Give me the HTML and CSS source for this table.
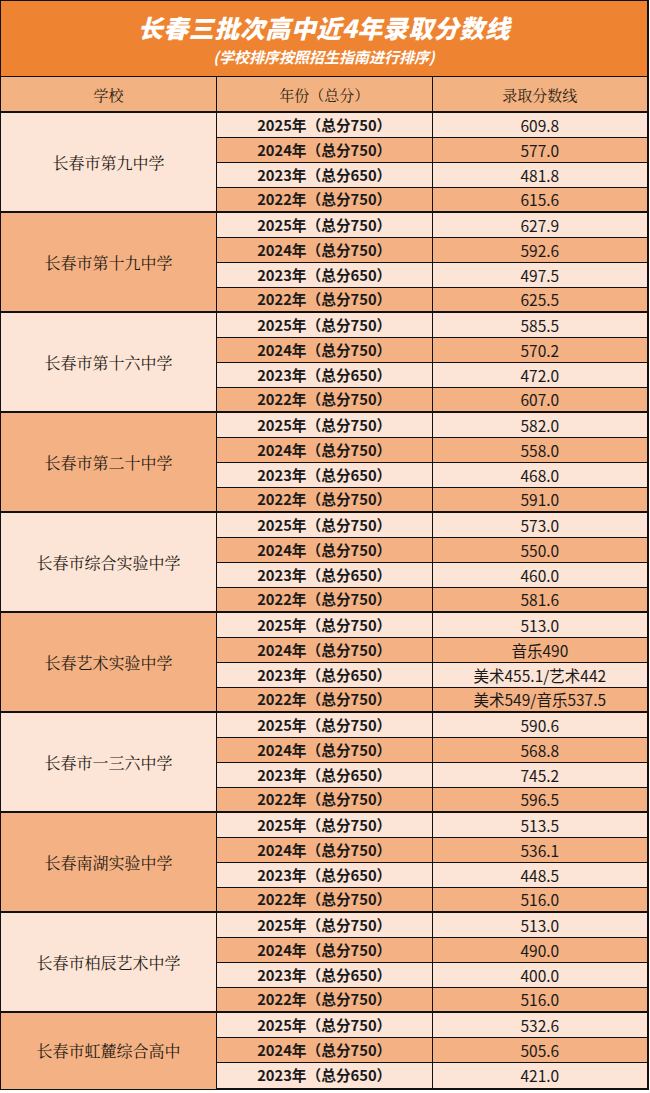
FILE: index.html
```html
<!DOCTYPE html>
<html lang="zh-CN">
<head>
<meta charset="utf-8">
<title>长春三批次高中近4年录取分数线</title>
<link rel="stylesheet" href="styles.css">
</head>
<body>
<table class="sheet">
  <thead>
    <tr class="title-row">
      <th colspan="3" class="title-cell">
        <div class="title">长春三批次高中近4年录取分数线</div>
        <div class="subtitle">(学校排序按照招生指南进行排序)</div>
      </th>
    </tr>
    <tr class="head-row">
      <th class="c1">学校</th>
      <th class="c2">年份（总分）</th>
      <th class="c3">录取分数线</th>
    </tr>
  </thead>
  <tbody>
    <tr class="first lt"><td class="school lt" rowspan="4">长春市第九中学</td><td class="year">2025年（总分750）</td><td class="score">609.8</td></tr>
    <tr class="dk"><td class="year">2024年（总分750）</td><td class="score">577.0</td></tr>
    <tr class="lt"><td class="year">2023年（总分650）</td><td class="score">481.8</td></tr>
    <tr class="dk"><td class="year">2022年（总分750）</td><td class="score">615.6</td></tr>

    <tr class="first lt"><td class="school dk" rowspan="4">长春市第十九中学</td><td class="year">2025年（总分750）</td><td class="score">627.9</td></tr>
    <tr class="dk"><td class="year">2024年（总分750）</td><td class="score">592.6</td></tr>
    <tr class="lt"><td class="year">2023年（总分650）</td><td class="score">497.5</td></tr>
    <tr class="dk"><td class="year">2022年（总分750）</td><td class="score">625.5</td></tr>

    <tr class="first lt"><td class="school lt" rowspan="4">长春市第十六中学</td><td class="year">2025年（总分750）</td><td class="score">585.5</td></tr>
    <tr class="dk"><td class="year">2024年（总分750）</td><td class="score">570.2</td></tr>
    <tr class="lt"><td class="year">2023年（总分650）</td><td class="score">472.0</td></tr>
    <tr class="dk"><td class="year">2022年（总分750）</td><td class="score">607.0</td></tr>

    <tr class="first lt"><td class="school dk" rowspan="4">长春市第二十中学</td><td class="year">2025年（总分750）</td><td class="score">582.0</td></tr>
    <tr class="dk"><td class="year">2024年（总分750）</td><td class="score">558.0</td></tr>
    <tr class="lt"><td class="year">2023年（总分650）</td><td class="score">468.0</td></tr>
    <tr class="dk"><td class="year">2022年（总分750）</td><td class="score">591.0</td></tr>

    <tr class="first lt"><td class="school lt" rowspan="4">长春市综合实验中学</td><td class="year">2025年（总分750）</td><td class="score">573.0</td></tr>
    <tr class="dk"><td class="year">2024年（总分750）</td><td class="score">550.0</td></tr>
    <tr class="lt"><td class="year">2023年（总分650）</td><td class="score">460.0</td></tr>
    <tr class="dk"><td class="year">2022年（总分750）</td><td class="score">581.6</td></tr>

    <tr class="first lt"><td class="school dk" rowspan="4">长春艺术实验中学</td><td class="year">2025年（总分750）</td><td class="score">513.0</td></tr>
    <tr class="dk"><td class="year">2024年（总分750）</td><td class="score">音乐490</td></tr>
    <tr class="lt"><td class="year">2023年（总分650）</td><td class="score">美术455.1/艺术442</td></tr>
    <tr class="dk"><td class="year">2022年（总分750）</td><td class="score">美术549/音乐537.5</td></tr>

    <tr class="first lt"><td class="school lt" rowspan="4">长春市一三六中学</td><td class="year">2025年（总分750）</td><td class="score">590.6</td></tr>
    <tr class="dk"><td class="year">2024年（总分750）</td><td class="score">568.8</td></tr>
    <tr class="lt"><td class="year">2023年（总分650）</td><td class="score">745.2</td></tr>
    <tr class="dk"><td class="year">2022年（总分750）</td><td class="score">596.5</td></tr>

    <tr class="first lt"><td class="school dk" rowspan="4">长春南湖实验中学</td><td class="year">2025年（总分750）</td><td class="score">513.5</td></tr>
    <tr class="dk"><td class="year">2024年（总分750）</td><td class="score">536.1</td></tr>
    <tr class="lt"><td class="year">2023年（总分650）</td><td class="score">448.5</td></tr>
    <tr class="dk"><td class="year">2022年（总分750）</td><td class="score">516.0</td></tr>

    <tr class="first lt"><td class="school lt" rowspan="4">长春市柏辰艺术中学</td><td class="year">2025年（总分750）</td><td class="score">513.0</td></tr>
    <tr class="dk"><td class="year">2024年（总分750）</td><td class="score">490.0</td></tr>
    <tr class="lt"><td class="year">2023年（总分650）</td><td class="score">400.0</td></tr>
    <tr class="dk"><td class="year">2022年（总分750）</td><td class="score">516.0</td></tr>

    <tr class="first lt"><td class="school dk" rowspan="3">长春市虹麓综合高中</td><td class="year">2025年（总分750）</td><td class="score">532.6</td></tr>
    <tr class="dk"><td class="year">2024年（总分750）</td><td class="score">505.6</td></tr>
    <tr class="lt last"><td class="year">2023年（总分650）</td><td class="score">421.0</td></tr>
  </tbody>
</table>
</body>
</html>
```

FILE: styles.css
```css
html, body {
  margin: 0;
  padding: 0;
  background: #ffffff;
}

.sheet {
  width: 649px;
  border-collapse: collapse;
  table-layout: fixed;
  font-family: "Noto Sans CJK SC", "Noto Sans", sans-serif;
  color: #1a1a1a;
  border-right: 2px solid #111;
  border-left: 1px solid #222;
}

.sheet th,
.sheet td {
  padding: 0;
  text-align: center;
  vertical-align: middle;
  border: 1px solid #111;
}

.c1 { width: 216px; }
.c2 { width: 216px; }

.title-cell {
  height: 75px;
  background: #ee8432;
  border-top: 1px solid #5a3a22;
  color: #fff;
  font-style: italic;
}

.title {
  font-size: 25px;
  font-weight: 900;
  line-height: 30px;
  letter-spacing: 0.5px;
  padding-top: 2px;
}

.subtitle {
  font-size: 15px;
  font-weight: 700;
  line-height: 20px;
  margin-top: 5px;
}

.head-row th {
  height: 34px;
  background: #f2b282;
  font-family: "Noto Serif CJK SC", "Noto Sans CJK SC", serif;
  font-weight: 400;
  font-size: 15px;
  color: #2a1d12;
  border-bottom: 2px solid #111;
}

.sheet tbody tr {
  height: 25px;
}

.sheet tbody tr.first td {
  border-top: 2px solid #111;
}

tr.lt td { background: #fce4d6; }
tr.dk td { background: #f4b183; }
.sheet td.school.lt { background: #fce4d6; }
.sheet td.school.dk { background: #f4b183; }

.school {
  font-family: "Noto Serif CJK SC", "Noto Sans CJK SC", serif;
  font-size: 16px;
  font-weight: 400;
  color: #1f1a14;
}

.year {
  font-size: 14.7px;
  font-weight: 700;
  line-height: 18px;
}

.score {
  font-size: 15.5px;
  font-weight: 400;
  line-height: 18px;
}

.sheet tbody tr.last {
  height: 27px;
}

tr.last td {
  border-bottom: 2px solid #111;
}
```
